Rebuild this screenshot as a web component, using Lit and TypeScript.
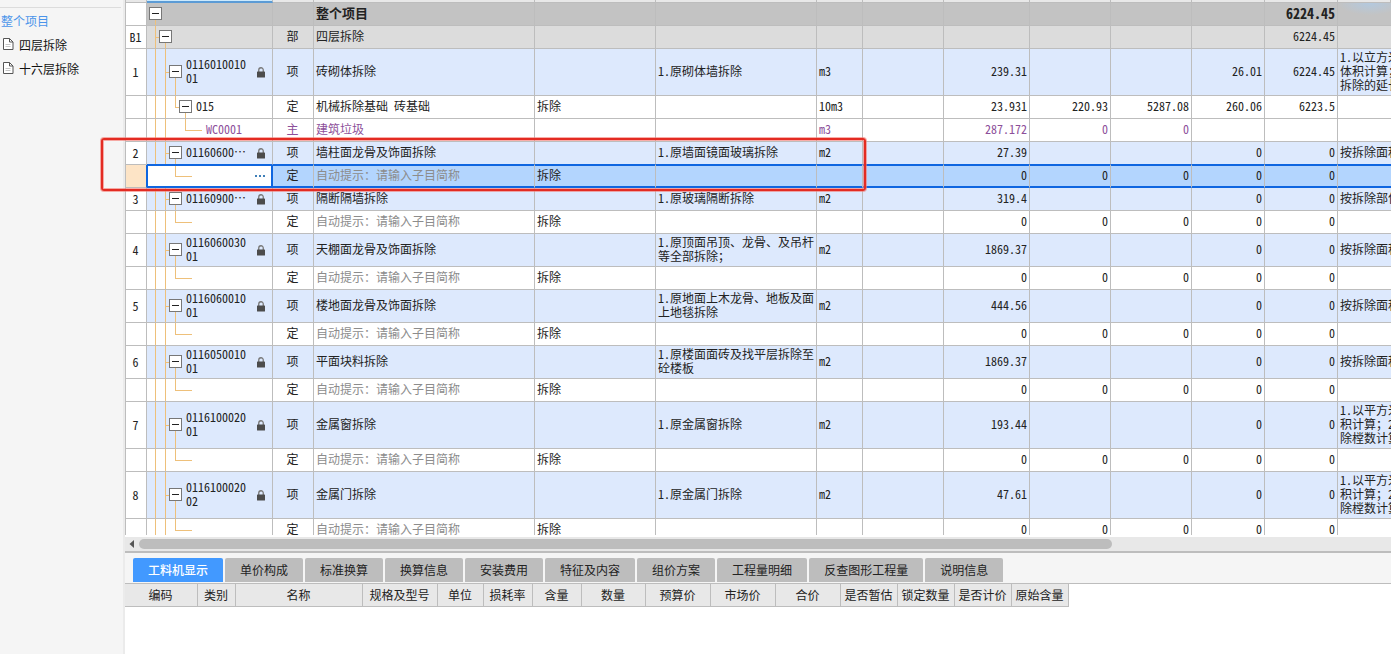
import { LitElement, html, css, svg, nothing } from "lit";
import { customElement, state } from "lit/decorators.js";
import { classMap } from "lit/directives/class-map.js";

type Kind = "project" | "part" | "item" | "quota" | "material" | "hint";

interface Row {
  no?: string;
  kind: Kind;
  code?: string;
  type?: string;
  name?: string;
  major?: string;
  feature?: string;
  unit?: string;
  values?: string[];
  note?: string;
  selected?: boolean;
  lines?: number;
}

const HINT = "自动提示：请输入子目简称";
const hint = (selected = false): Row => ({
  kind: "hint",
  type: "定",
  name: HINT,
  major: "拆除",
  values: ["0", "0", "0", "0", "0"],
  selected,
});
const item = (no: string, code: string, name: string, feature: string, qty: string, note: string, lines: number): Row => ({
  no,
  kind: "item",
  code,
  type: "项",
  name,
  feature,
  unit: "m2",
  values: [qty, "", "", "0", "0"],
  note,
  lines,
});

const ROWS: Row[] = [
  { kind: "project", name: "整个项目", values: ["", "", "", "", "6224.45"] },
  { no: "B1", kind: "part", type: "部", name: "四层拆除", values: ["", "", "", "", "6224.45"] },
  {
    no: "1", kind: "item", code: "0116010010\n01", type: "项", name: "砖砌体拆除", feature: "1.原砌体墙拆除", unit: "m3",
    values: ["239.31", "", "", "26.01", "6224.45"], note: "1.以立方米\n体积计算；\n拆除的延长", lines: 3,
  },
  {
    kind: "quota", code: "015", type: "定", name: "机械拆除基础 砖基础", major: "拆除", unit: "10m3",
    values: ["23.931", "220.93", "5287.08", "260.06", "6223.5"],
  },
  { kind: "material", code: "WC0001", type: "主", name: "建筑垃圾", unit: "m3", values: ["287.172", "0", "0", "", ""] },
  item("2", "01160600…", "墙柱面龙骨及饰面拆除", "1.原墙面镜面玻璃拆除", "27.39", "按拆除面积", 1),
  hint(true),
  item("3", "01160900…", "隔断隔墙拆除", "1.原玻璃隔断拆除", "319.4", "按拆除部位", 1),
  hint(),
  item("4", "0116060030\n01", "天棚面龙骨及饰面拆除", "1.原顶面吊顶、龙骨、及吊杆\n等全部拆除；", "1869.37", "按拆除面积", 2),
  hint(),
  item("5", "0116060010\n01", "楼地面龙骨及饰面拆除", "1.原地面上木龙骨、地板及面\n上地毯拆除", "444.56", "按拆除面积", 2),
  hint(),
  item("6", "0116050010\n01", "平面块料拆除", "1.原楼面面砖及找平层拆除至\n砼楼板", "1869.37", "按拆除面积", 2),
  hint(),
  item("7", "0116100020\n01", "金属窗拆除", "1.原金属窗拆除", "193.44", "1.以平方米\n积计算；2.\n除樘数计算", 3),
  hint(),
  item("8", "0116100020\n02", "金属门拆除", "1.原金属门拆除", "47.61", "1.以平方米\n积计算；2.\n除樘数计算", 3),
  hint(),
];

const COLUMNS = [21, 126, 41, 221, 121, 161, 46, 81, 86, 81, 81, 73, 73];
const TABS = ["工料机显示", "单价构成", "标准换算", "换算信息", "安装费用", "特征及内容", "组价方案", "工程量明细", "反查图形工程量", "说明信息"];
const DETAIL: [string, number][] = [
  ["编码", 73], ["类别", 38], ["名称", 127], ["规格及型号", 75], ["单位", 46], ["损耗率", 49], ["含量", 49], ["数量", 64],
  ["预算价", 65], ["市场价", 65], ["合价", 65], ["是否暂估", 57], ["锁定数量", 57], ["是否计价", 57], ["原始含量", 57],
];

const minus = svg`<path d="M3 6.5h7" stroke="#222" stroke-width="1" fill="none"/>`;

@customElement("project-tree")
export class ProjectTree extends LitElement {
  static styles = css`
    :host { display: block; padding-top: 7px; }
    .nav { border-top: 1px solid #dcdcdc; margin-right: 2px; padding-top: 1px; display: flex; flex-direction: column; }
    a { display: flex; align-items: center; height: 24px; gap: 5px; padding-left: 3px; color: #111; text-decoration: none; white-space: nowrap; }
    a.root { color: #4a94ea; padding-left: 1px; }
    svg { display: block; margin-bottom: 2px; }
  `;
  private file() {
    return html`<svg width="11" height="13" viewBox="0 0 11 13" aria-hidden="true" fill="none" stroke="#555">
      <path d="M.5.5h6l3.500 3.500v7.500H.5z" fill="#fff" /><path d="M6.5.5v3.500h3.500" /><path d="M2.5 6.5h5M2.5 8.500h5" stroke="#c4c4c4" />
    </svg>`;
  }
  render() {
    return html`<nav class="nav">
      <a class="root" href="#all">整个项目</a>
      <a href="#f4">${this.file()}四层拆除</a>
      <a href="#f16">${this.file()}十六层拆除</a>
    </nav>`;
  }
}

@customElement("bill-grid")
export class BillGrid extends LitElement {
  static styles = css`
    :host { display: block; overflow: hidden; background: #fff; border-left: 1px solid #bdbdbd; }
    table { table-layout: fixed; width: 100%; border-collapse: separate; border-spacing: 0; }
    th { height: 2px; padding: 0; background: #e8e8e8; border-right: 1px solid #bdbdbd; border-bottom: 1px solid #bdbdbd; }
    th.active { background: #cdeafd; height: 1px; border-bottom: 2px solid #5b9bd5; }
    td {
      box-sizing: border-box; height: 23px; padding: 0 2px 2px; overflow: hidden; white-space: pre; line-height: 14px;
      border-right: 1px solid #bdbdbd; border-bottom: 1px solid #bdbdbd; vertical-align: middle; color: #222;
    }
    .two td { height: 33px; }
    .three td { height: 47px; }
    td.center { text-align: center; padding: 0 1px 2px 0; }
    td.no { padding-bottom: 0; }
    td.number { text-align: right; padding-right: 2px; }
    td:last-child { border-right: 0; }
    .item td { background-color: #dde9fd; }
    .part td { background-color: #dcdcdc; }
    .project td { background-color: #c3c3c3; font-size: 13px; font-weight: bold; }
    .project td.number { font-size: 14px; }
    .project td:last-child { background-image: radial-gradient(ellipse 32px 12px at 32px 0, #b3c9df, transparent); }
    .material td { color: #8d4f9a; }
    .hint td.name { color: #8c8c8c; }
    tr td.no { background-color: #fff; }

    td.code {
      --v: linear-gradient(#eec07a, #eec07a);
      padding: 0 0 2px; background-repeat: no-repeat;
      background-image: var(--v), var(--v), var(--v), var(--v);
    }
    .project td.code { background-image: var(--v); background-size: 1px 50%; background-position: 8px 100%; }
    .part td.code { background-size: 1px 100%, 4px 1px, 1px 50%, 0 0; background-position: 8px 0, 8px 50%, 18px 100%, 0 0; }
    .item td.code { background-size: 1px 100%, 1px 100%, 4px 1px, 1px 50%; background-position: 8px 0, 18px 0, 18px 50%, 28px 100%; }
    .hint td.code { background-size: 1px 100%, 1px 100%, 1px 50%, 17px 1px; background-position: 8px 0, 18px 0, 28px 0, 28px 50%; }
    .quota td.code {
      background-image: var(--v), var(--v), var(--v), var(--v), var(--v);
      background-size: 1px 100%, 1px 100%, 1px 50%, 4px 1px, 1px 50%;
      background-position: 8px 0, 18px 0, 28px 0, 28px 50%, 38px 100%;
    }
    .material td.code { background-size: 1px 100%, 1px 100%, 1px 50%, 17px 1px; background-position: 8px 0, 18px 0, 38px 0, 38px 50%; }

    .node { display: flex; align-items: center; gap: 4px; min-height: 14px; padding: 0 7px 0 22px; }
    .project .node { padding-left: 2px; }
    .part .node { padding-left: 12px; }
    .quota .node { padding-left: 32px; }
    .material .node { padding-left: 59px; }
    .label { flex: 1; }
    .toggle { flex: none; width: 13px; height: 13px; margin-top: 1px; padding: 0; border: 0; background: none; }
    .toggle svg, .lock { display: block; }
    .lock { flex: none; margin-top: 3px; }

    tr.above td { border-bottom-color: #0f66e0; }
    tr.selected td { background-color: #b3d5fe; border-bottom-color: #0f66e0; box-shadow: inset 0 1px #0f66e0, inset 0 -1px #0f66e0; }
    tr.selected td.no { background-color: #fde4c6; box-shadow: none; border-bottom-color: #bdbdbd; border-right-color: #0f66e0; }
    tr.above td.no { border-bottom-color: #bdbdbd; }
    tr.selected td.code {
      background-color: #fff; border-right-color: #0f66e0;
      background-size: 0 0, 0 0, 1px 50%, 17px 1px;
      box-shadow: inset 1px 1px #0f66e0, inset -1px -1px #0f66e0;
    }
    .edit { display: flex; align-items: center; padding: 0 6px 0 48px; }
    .edit input { flex: 1; min-width: 0; border: 0; padding: 0; height: 16px; background: none; outline: none; font: inherit; }
    .edit button { flex: none; border: 0; background: none; padding: 0; width: 12px; height: 12px; }
    .edit svg { display: block; }
  `;

  private code(r: Row) {
    if (r.kind === "hint") {
      return r.selected
        ? html`<div class="edit"><input type="text" aria-label="编码" /><button aria-label="选择"><svg width="12" height="12" fill="#3f7fb8"><path d="M1 6h2v2H1zM5 6h2v2H5zM9 6h2v2H9z" /></svg></button></div>`
        : nothing;
    }
    return html`<div class="node">${r.kind === "material"
        ? nothing
        : html`<button class="toggle" aria-label="折叠"><svg width="13" height="13"><rect x=".5" y=".5" width="12" height="12" fill="#fff" stroke="#777" />${minus}</svg></button>`}<span class="label">${r.code ?? ""}</span>${r.kind === "item"
        ? html`<svg class="lock" width="8" height="11" aria-hidden="true"><path d="M1.75 5V3a2.25 2.25 0 0 1 4.5 0v2" fill="none" stroke="#777" stroke-width="1.3" /><rect y="4.5" width="8" height="6" rx=".6" fill="#4c4c4c" /></svg>`
        : nothing}</div>`;
  }

  render() {
    return html`<table>
      <colgroup>${COLUMNS.map((w) => html`<col style="width:${w}px" />`)}<col /></colgroup>
      <thead><tr>${[...COLUMNS, 0].map((_, i) => html`<th class=${i === 1 ? "active" : ""}></th>`)}</tr></thead>
      <tbody>
        ${ROWS.map((r, i) => html`<tr class=${classMap({
            [r.kind]: true, two: r.lines === 2, three: r.lines === 3, selected: !!r.selected, above: !!ROWS[i + 1]?.selected,
          })}><td class="no center">${r.no ?? ""}</td><td class="code">${this.code(r)}</td><td class="center">${r.type ?? ""}</td><td class="name">${r.name}</td><td>${r.major ?? ""}</td><td>${r.feature ?? ""}</td><td>${r.unit ?? ""}</td><td></td>${r.values!.map((v) => html`<td class="number">${v}</td>`)}<td>${r.note ?? ""}</td></tr>`)}
      </tbody>
    </table>`;
  }
}

@customElement("detail-dock")
export class DetailDock extends LitElement {
  @state() private tab = 0;

  static styles = css`
    :host { display: block; background: #fff; min-height: 119px; }
    .scroll { display: flex; align-items: center; height: 14px; margin-top: 2px; background: #e8e8e8; border-bottom: 2px solid #bdbdbd; }
    .arrow { flex: none; width: 14px; height: 14px; padding: 0; border: 0; background: none; }
    .arrow svg { display: block; }
    .track { flex: 1; }
    .thumb { width: 77.7%; height: 10px; border-radius: 5px; background: #bdbdbd; }
    .tabs { display: flex; gap: 2px; padding: 5px 8px 1px; background: #f5f5f5; border-bottom: 1px solid #bdbdbd; }
    .tab { flex: none; height: 24px; padding: 0 15px; border: 0; border-radius: 2px 2px 0 0; background: #bdbdbd; color: #222; font: inherit; line-height: 24px; }
    .tab.on { background: #4299ff; color: #fff; font-weight: 500; }
    table { table-layout: fixed; width: 944px; border-collapse: separate; border-spacing: 0; }
    th { box-sizing: border-box; height: 23px; padding: 0 1px 0 0; background: #e8e8e8; border-right: 1px solid #bdbdbd; border-bottom: 1px solid #bdbdbd; font-weight: normal; color: #222; line-height: 14px; white-space: nowrap; }
  `;

  render() {
    return html`
      <div class="scroll">
        <button class="arrow" aria-label="向左滚动"><svg width="14" height="14"><path d="M9 3v8L4.500 7z" fill="#555" /></svg></button>
        <div class="track"><div class="thumb"></div></div>
      </div>
      <div class="tabs" role="tablist">
        ${TABS.map((t, i) => html`<button role="tab" aria-selected=${i === this.tab} class=${classMap({ tab: true, on: i === this.tab })} @click=${() => (this.tab = i)}>${t}</button>`)}
      </div>
      <table>
        <colgroup>${DETAIL.map(([, w]) => html`<col style="width:${w}px" />`)}</colgroup>
        <thead><tr>${DETAIL.map(([t]) => html`<th>${t}</th>`)}</tr></thead>
      </table>`;
  }
}

@customElement("app-root")
export class AppRoot extends LitElement {
  static styles = css`
    :host {
      display: flex; position: relative; height: 100vh; overflow: hidden; background: #f5f5f5;
      font: 12px/14px "Noto Sans CJK SC", sans-serif; font-feature-settings: "hwid"; text-spacing-trim: space-all;
    }
    project-tree { flex: none; width: 123px; border-right: 2px solid #ebebeb; }
    main { flex: 1; min-width: 0; display: flex; flex-direction: column; }
    bill-grid { flex: 1; min-height: 0; }
    detail-dock { flex: none; }
    .mark {
      position: absolute; left: 101px; top: 138px; width: 765px; height: 53px; box-sizing: border-box; pointer-events: none;
      border: 2px solid #e32b22; border-radius: 3px; box-shadow: 0 0 0 1px #f5766e99, inset 0 0 0 1px #f5766e99;
    }
  `;
  render() {
    return html`<project-tree></project-tree>
      <main><bill-grid></bill-grid><detail-dock></detail-dock></main>
      <div class="mark"></div>`;
  }
}
